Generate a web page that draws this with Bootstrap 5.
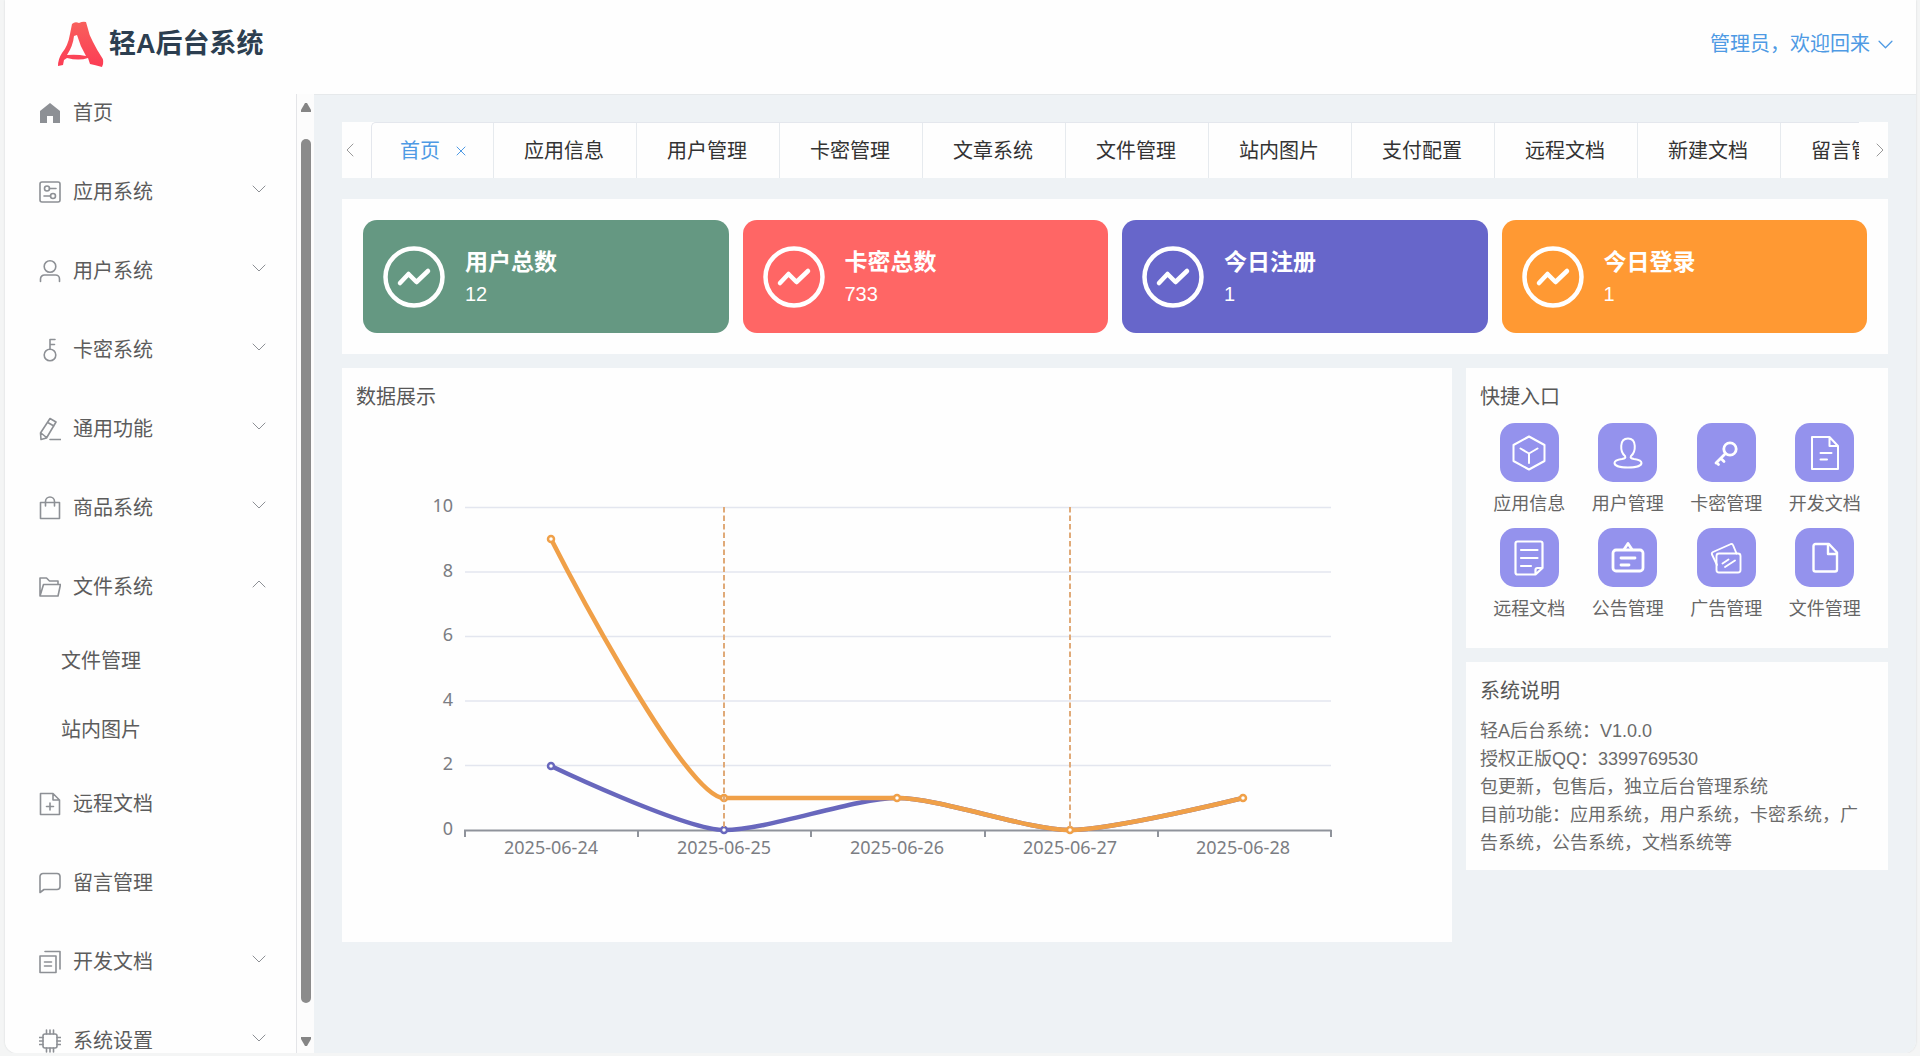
<!DOCTYPE html>
<html lang="zh-CN">
<head>
<meta charset="utf-8">
<meta name="viewport" content="width=device-width, initial-scale=1">
<title>轻A后台系统</title>
<link href="https://cdn.jsdelivr.net/npm/bootstrap@5.3.0/dist/css/bootstrap.min.css" rel="stylesheet">
<style>
  body { font-family: "Liberation Sans", "Noto Sans CJK SC", sans-serif; font-size: 20px; line-height: 30px; color: #5c5c5c; background: #f4f5f5; }
  a { color: inherit; text-decoration: none; }
  svg { display: block; flex: none; }
  .ico { fill: none; stroke: currentColor; stroke-linejoin: round; stroke-linecap: round; }
  .app-frame { height: calc(100vh - 3px); margin: 0 4px 0 5px; background: #fefefe; border-radius: 0 0 12px 12px; box-shadow: 0 0 2px #cfd2d4; overflow: hidden; }
  .app-head { height: 94px; padding: 0 23px 6px 50px; }
  .app-body { min-height: 0; }
  .brand-text { font-size: 27px; line-height: 36px; color: #2c3e50; }
  .user-btn { color: #4e9ae4; font-size: 20px; line-height: 30px; border: 0; background: none; padding: 0; }

  .side-wrap { width: 309px; flex: none; background: #fefefe; min-height: 0; }
  .side-menu { margin: -21px 0 0; border-right: 1px solid #e4e5e8; }
  .side-menu a { height: 79px; padding: 0 30px 0 34px; }
  .side-menu a.sub-link { height: 69px; padding-left: 56px; }
  .side-menu .ico { color: #8d9095; margin-right: 12px; }
  .side-menu .arrow { margin: -6px 0 0 auto; }
  .side-bar { width: 17px; padding: 9px 3px 7px 4px; background: #fcfcfc; }
  .side-thumb { width: 10px; border-radius: 5px; background: #8b8b8b; margin: 27px 0 34px; }

  .app-main { background: #eef2f5; border-top: 1px solid #e6e9eb; padding: 27px 28px 0 28px; min-width: 0; }
  .white-box { background: #fefefe; }
  .tab-strip { height: 56px; margin-bottom: 21px; color: #333; }
  .tab-strip .step { width: 29px; border: 0; background: none; padding: 0; color: #999; flex: none; }
  .tab-list { border-top: 1px solid #e4e7ed; border-left: 1px solid #e4e7ed; border-radius: 5px 0 0 0; min-width: 0; }
  .tab-list a { padding: 0 32px 0 30px; border-right: 1px solid #e6eaee; white-space: nowrap; flex: none; }
  .tab-list a.on { color: #4e9ae4; padding: 0 23px 0 28px; }

  .stats { padding: 21px; gap: 14px; margin-bottom: 14px; }
  .stat { flex: 1 1 0; height: 113px; border-radius: 14px; padding-left: 20px; gap: 20px; color: #fff; }
  .stat-name { font-size: 23px; line-height: 34px; font-weight: 700; }
  .stat-num { line-height: 30px; }
  .c-green { background: #659882; } .c-red { background: #ff6665; } .c-blue { background: #6766ca; } .c-orange { background: #ff9933; }

  .lower { gap: 14px; }
  .chart-box { flex: 1110 1 0; min-width: 0; }
  .right-col { flex: 422 1 0; gap: 14px; min-width: 0; }
  .box-title { font-size: 20px; line-height: 30px; font-weight: 400; margin: 0; color: #585858; }
  .chart-box .box-title { padding: 14px 14px 0; }
  .chart-box svg { width: 100%; height: auto; }
  .chart-box text { font-family: "Noto Sans", sans-serif; font-size: 18px; fill: #7b7d83; }
  .quick { padding: 14px 14px 25px; }
  .quick-grid { display: grid; grid-template-columns: repeat(4, 1fr); row-gap: 10px; margin-top: 11px; }
  .quick-grid a { font-size: 18px; line-height: 27px; color: #666; gap: 9px; }
  .tile { width: 59px; height: 59px; border-radius: 15px; background: #9492ed; color: #fff; }
  .about { padding: 14px 14px 13px; }
  .about p { font-size: 18px; line-height: 28px; margin: 11px 0 0; color: #6b6b6b; }
</style>
</head>
<body>
<svg width="0" height="0" class="position-absolute" aria-hidden="true">
  <defs>
    <symbol id="down" viewBox="0 0 14 8"><path d="M1 1l6 6 6-6"/></symbol>
    <symbol id="trend" viewBox="0 0 62 62"><circle cx="31" cy="31" r="28.500" stroke-width="4.500"/><path d="M17 37l8.500-9 8 8L45 25" stroke-width="4.500"/></symbol>
  </defs>
</svg>
<div class="app-frame d-flex flex-column">
  <header class="app-head d-flex align-items-center justify-content-between flex-shrink-0">
    <a href="#" class="d-flex align-items-center gap-1">
      <svg width="50" height="50" viewBox="0 0 50 50" aria-hidden="true">
        <defs><linearGradient id="lg" x1="0" y1="0" x2="0" y2="1"><stop offset="0" stop-color="#f8605c"/><stop offset="1" stop-color="#fc3c55"/></linearGradient></defs>
        <path fill="url(#lg)" fill-rule="evenodd" d="M17 5Q20 2 24 4Q28 2 31 3L33 10Q34 16 38 23Q42 31 46 37Q50 42 47 48Q40 46 35 45L33 39Q24 42 12 39L9 41L8 46L3 47Q3 40 7 34Q13 27 15 15ZM19 17Q18 27 12 36Q22 35 31 37Q25 27 22 16Z"/>
      </svg>
      <span class="brand-text fw-bold">轻A后台系统</span>
    </a>
    <button type="button" class="user-btn d-flex align-items-center gap-2">管理员，欢迎回来
      <svg class="ico" width="15" height="9" stroke-width="1.2"><use href="#down"/></svg>
    </button>
  </header>
  <div class="app-body d-flex flex-grow-1">
    <aside class="side-wrap d-flex overflow-hidden">
      <nav class="side-menu flex-grow-1" aria-label="主菜单">
        <a href="#" class="d-flex align-items-center"><svg class="ico" width="22" height="22" viewBox="0 0 22 22"><path fill="currentColor" stroke="none" d="M11 1L21 9v12h-7v-7H8v7H1V9z"/></svg>首页</a>
        <a href="#" class="d-flex align-items-center"><svg class="ico" width="22" height="22" viewBox="0 0 22 22" stroke-width="1.600"><rect x="1" y="1" width="20" height="20" rx="2"/><circle cx="8" cy="7.500" r="2.500"/><path d="M10.500 7.500H17M5 15h6.500"/><circle cx="14" cy="15" r="2.500"/></svg>应用系统<svg class="ico arrow me-0" width="14" height="8"><use href="#down"/></svg></a>
        <a href="#" class="d-flex align-items-center"><svg class="ico" width="22" height="24" viewBox="0 0 22 24" stroke-width="1.600"><circle cx="11" cy="7.500" r="5.800"/><path d="M1.500 22.500V20a4 4 0 0 1 4-4h11a4 4 0 0 1 4 4v2.500"/></svg>用户系统<svg class="ico arrow me-0" width="14" height="8"><use href="#down"/></svg></a>
        <a href="#" class="d-flex align-items-center"><svg class="ico" width="22" height="24" viewBox="0 0 22 24" stroke-width="1.600"><circle cx="11" cy="17" r="5.800"/><path d="M11 11V1.500h5M11 6.500h4.500"/></svg>卡密系统<svg class="ico arrow me-0" width="14" height="8"><use href="#down"/></svg></a>
        <a href="#" class="d-flex align-items-center"><svg class="ico" width="22" height="24" viewBox="0 0 22 24" stroke-width="1.600"><path d="M11 1.500l6 3.500-9.500 16-5.500 1.500-.5-6.500zM8.800 5.500l6 3.500M2 16l5.500 4.500M11 22.500h10.500"/></svg>通用功能<svg class="ico arrow me-0" width="14" height="8"><use href="#down"/></svg></a>
        <a href="#" class="d-flex align-items-center"><svg class="ico" width="22" height="24" viewBox="0 0 22 24" stroke-width="1.600"><path d="M1.500 6.500h19v16h-19zM6.500 10V5.500a4.500 4.500 0 0 1 9 0V10"/></svg>商品系统<svg class="ico arrow me-0" width="14" height="8"><use href="#down"/></svg></a>
        <a href="#" class="d-flex align-items-center"><svg class="ico" width="22" height="22" viewBox="0 0 22 22" stroke-width="1.600"><path d="M1 20V2h6.500l3 3H19v3.500M1 20L4.500 8.500h17L19 20z"/></svg>文件系统<svg class="ico arrow me-0" width="14" height="8" viewBox="0 0 14 8"><path d="M1 7l6-6 6 6"/></svg></a>
        <a href="#" class="sub-link d-flex align-items-center">文件管理</a>
        <a href="#" class="sub-link d-flex align-items-center">站内图片</a>
        <a href="#" class="d-flex align-items-center"><svg class="ico" width="22" height="24" viewBox="0 0 22 24" stroke-width="1.600"><path d="M1.500 1.500H14l6.500 6.500v14.500h-19zM14 1.500V8h6.500M11 11v7M7.500 14.500h7"/></svg>远程文档</a>
        <a href="#" class="d-flex align-items-center"><svg class="ico" width="22" height="22" viewBox="0 0 22 22" stroke-width="1.600"><path d="M4 1.500h14a3 3 0 0 1 3 3v10a3 3 0 0 1-3 3H5l-4 3v-16a3 3 0 0 1 3-3z"/></svg>留言管理</a>
        <a href="#" class="d-flex align-items-center"><svg class="ico" width="22" height="24" viewBox="0 0 22 24" stroke-width="1.600"><path d="M1 6h16v16.500H1zM6 1.500h15V19M5.500 12h7M5.500 16h7"/></svg>开发文档<svg class="ico arrow me-0" width="14" height="8"><use href="#down"/></svg></a>
        <a href="#" class="d-flex align-items-center"><svg class="ico" width="22" height="24" viewBox="0 0 22 24" stroke-width="1.600"><rect x="4" y="5" width="14" height="14" rx="2"/><path d="M7.500 1v4M11 1v4M14.500 1v4M7.500 19v4M11 19v4M14.500 19v4M.5 8.500H4M.5 12H4M.5 15.500H4M18 8.500h3.500M18 12h3.500M18 15.500h3.500"/></svg>系统设置<svg class="ico arrow me-0" width="14" height="8"><use href="#down"/></svg></a>
      </nav>
      <div class="side-bar d-flex flex-column" aria-hidden="true">
        <svg width="10" height="9" viewBox="0 0 10 9"><path fill="#858585" d="M4 0h2l4 7v2H0V7z"/></svg>
        <div class="side-thumb flex-grow-1"></div>
        <svg width="10" height="9" viewBox="0 0 10 9"><path fill="#858585" d="M0 0h10v2L6 9H4L0 2z"/></svg>
      </div>
    </aside>
    <main class="app-main flex-grow-1">
      <div class="tab-strip white-box d-flex">
        <button type="button" class="step d-flex align-items-center ps-1" aria-label="向左"><svg class="ico" width="8" height="14" viewBox="0 0 8 14"><path d="M7 1L1 7l6 6"/></svg></button>
        <nav class="tab-list d-flex flex-grow-1 overflow-hidden" aria-label="标签页">
          <a href="#" class="on d-flex align-items-center">首页<svg class="ico ms-3 me-1" width="10" height="10" viewBox="0 0 10 10"><path d="M1 1l8 8M9 1L1 9"/></svg></a>
          <a href="#" class="d-flex align-items-center">应用信息</a>
          <a href="#" class="d-flex align-items-center">用户管理</a>
          <a href="#" class="d-flex align-items-center">卡密管理</a>
          <a href="#" class="d-flex align-items-center">文章系统</a>
          <a href="#" class="d-flex align-items-center">文件管理</a>
          <a href="#" class="d-flex align-items-center">站内图片</a>
          <a href="#" class="d-flex align-items-center">支付配置</a>
          <a href="#" class="d-flex align-items-center">远程文档</a>
          <a href="#" class="d-flex align-items-center">新建文档</a>
          <a href="#" class="d-flex align-items-center">留言管理</a>
        </nav>
        <button type="button" class="step d-flex align-items-center justify-content-end pe-1" aria-label="向右"><svg class="ico" width="8" height="14" viewBox="0 0 8 14"><path d="M1 1l6 6-6 6"/></svg></button>
      </div>

      <section class="stats white-box d-flex">
        <div class="stat c-green d-flex align-items-center"><svg class="ico" width="62" height="62"><use href="#trend"/></svg><div><div class="stat-name">用户总数</div><div class="stat-num">12</div></div></div>
        <div class="stat c-red d-flex align-items-center"><svg class="ico" width="62" height="62"><use href="#trend"/></svg><div><div class="stat-name">卡密总数</div><div class="stat-num">733</div></div></div>
        <div class="stat c-blue d-flex align-items-center"><svg class="ico" width="62" height="62"><use href="#trend"/></svg><div><div class="stat-name">今日注册</div><div class="stat-num">1</div></div></div>
        <div class="stat c-orange d-flex align-items-center"><svg class="ico" width="62" height="62"><use href="#trend"/></svg><div><div class="stat-name">今日登录</div><div class="stat-num">1</div></div></div>
      </section>

      <div class="lower d-flex align-items-start">
        <section class="chart-box white-box">
          <h2 class="box-title">数据展示</h2>
          <svg viewBox="0 0 1110 530" role="img" aria-label="数据展示折线图">
            <path d="M123 95.500H989M123 160H989M123 224.500H989M123 289H989M123 353.500H989" stroke="#e3e6ef" stroke-width="1.500"/>
            <path d="M122 418.500H989.500M123 418v7M296 418v7M469 418v7M643 418v7M816 418v7M989 418v7" stroke="#8f939b" stroke-width="2" fill="none"/>
            <g text-anchor="end"><text x="111" y="100">10</text><text x="111" y="165">8</text><text x="111" y="229">6</text><text x="111" y="294">4</text><text x="111" y="358">2</text><text x="111" y="423">0</text></g>
            <g text-anchor="middle"><text x="209" y="442">2025-06-24</text><text x="382" y="442">2025-06-25</text><text x="555" y="442">2025-06-26</text><text x="728" y="442">2025-06-27</text><text x="901" y="442">2025-06-28</text></g>
            <g fill="none" stroke-width="4.600" stroke-linejoin="round">
              <path stroke="#6867bd" d="M209 354C209 354 343 418 382 418C426 418 512 386 555 386C598 386 685 418 728 418C771 418 901 386 901 386"/>
              <path stroke="#f0a048" d="M209 127C209 127 341 386 382 386C426 386 512 386 555 386C598 386 685 418 728 418C771 418 901 386 901 386"/>
            </g>
            <g fill="#fff" stroke-width="2.500"><g stroke="#6867bd"><circle cx="209" cy="354" r="3"/><circle cx="382" cy="418" r="3"/></g>
            <g stroke="#f0a048"><circle cx="209" cy="127" r="3"/><circle cx="382" cy="386" r="3"/><circle cx="555" cy="386" r="3"/><circle cx="728" cy="418" r="3"/><circle cx="901" cy="386" r="3"/></g></g>
            <path d="M382 95V418M728 95V418" stroke="#e0aa78" stroke-width="2" stroke-dasharray="5.500 3"/>
          </svg>
        </section>
        <div class="right-col d-flex flex-column">
          <section class="quick white-box">
            <h2 class="box-title">快捷入口</h2>
            <div class="quick-grid">
              <a href="#" class="d-flex flex-column align-items-center"><span class="tile d-flex align-items-center justify-content-center"><svg class="ico" width="36" height="36" viewBox="0 0 36 36" stroke-width="2"><path d="M18 1.500l15.500 8.500v16L18 34.500 2.500 26V10zM9.500 13.500l8.500 5 8.500-5M18 18.500V28"/></svg></span>应用信息</a>
              <a href="#" class="d-flex flex-column align-items-center"><span class="tile d-flex align-items-center justify-content-center"><svg class="ico" width="36" height="36" viewBox="0 0 36 36" stroke-width="2"><path d="M15 21C10 17 9 3.500 18 3.500S26 17 21 21c-1 2 0 2.500 3 3 4 .5 7.500 1.500 7.500 4 0 6-27 6-27 0 0-2.500 3.500-3.500 7.500-4 3-.5 4-1 3-3z"/></svg></span>用户管理</a>
              <a href="#" class="d-flex flex-column align-items-center"><span class="tile d-flex align-items-center justify-content-center"><svg class="ico" width="36" height="36" viewBox="0 0 36 36" stroke-width="2.800"><circle cx="22" cy="14" r="6.200"/><path d="M17.500 18.500L8 28M13 23.500l3 3M8.500 27.500l2 2"/></svg></span>卡密管理</a>
              <a href="#" class="d-flex flex-column align-items-center"><span class="tile d-flex align-items-center justify-content-center"><svg class="ico" width="36" height="36" viewBox="0 0 36 36" stroke-width="2"><path d="M5 2h17.500L31 11v23H5zM22.500 2v9H31M13.500 18h11M13.500 24.500h6.500"/></svg></span>开发文档</a>
              <a href="#" class="d-flex flex-column align-items-center"><span class="tile d-flex align-items-center justify-content-center"><svg class="ico" width="36" height="36" viewBox="0 0 36 36" stroke-width="2.200"><path d="M6.500 1.500h23a2 2 0 0 1 2 2V28l-7 6.500h-18a2 2 0 0 1-2-2v-29a2 2 0 0 1 2-2zM31.500 28h-5a2 2 0 0 0-2 2v4.500M10 10h16.500M10 18h16.500M10 26h10"/></svg></span>远程文档</a>
              <a href="#" class="d-flex flex-column align-items-center"><span class="tile d-flex align-items-center justify-content-center"><svg class="ico" width="36" height="36" viewBox="0 0 36 36" stroke-width="2.800"><rect x="3" y="10" width="30" height="21" rx="3"/><path d="M14 9.500l4-6 4 6M11 18h14M11 25h8"/></svg></span>公告管理</a>
              <a href="#" class="d-flex flex-column align-items-center"><span class="tile d-flex align-items-center justify-content-center"><svg class="ico" width="36" height="36" viewBox="0 0 36 36" stroke-width="1.900"><rect x="8.500" y="13.500" width="24" height="19" rx="2.500"/><path d="M9 25L4 14.500a2 2 0 0 1 1-2.500L23 4a1.500 1.500 0 0 1 2 1l3.500 8.500M14.500 23.500l6-4M17 27l10-6.500"/></svg></span>广告管理</a>
              <a href="#" class="d-flex flex-column align-items-center"><span class="tile d-flex align-items-center justify-content-center"><svg class="ico" width="36" height="36" viewBox="0 0 36 36" stroke-width="2.400"><path d="M8.500 4H22l8 8.500v17a2 2 0 0 1-2 2H8.500a2 2 0 0 1-2-2V6a2 2 0 0 1 2-2zM21 4.500v9.500h8.500"/></svg></span>文件管理</a>
            </div>
          </section>
          <section class="about white-box">
            <h2 class="box-title">系统说明</h2>
            <p>轻A后台系统：V1.0.0<br>授权正版QQ：3399769530<br>包更新，包售后，独立后台管理系统<br>目前功能：应用系统，用户系统，卡密系统，广告系统，公告系统，文档系统等</p>
          </section>
        </div>
      </div>
    </main>
  </div>
</div>
<script src="https://cdn.jsdelivr.net/npm/bootstrap@5.3.0/dist/js/bootstrap.bundle.min.js"></script>
</body>
</html>
